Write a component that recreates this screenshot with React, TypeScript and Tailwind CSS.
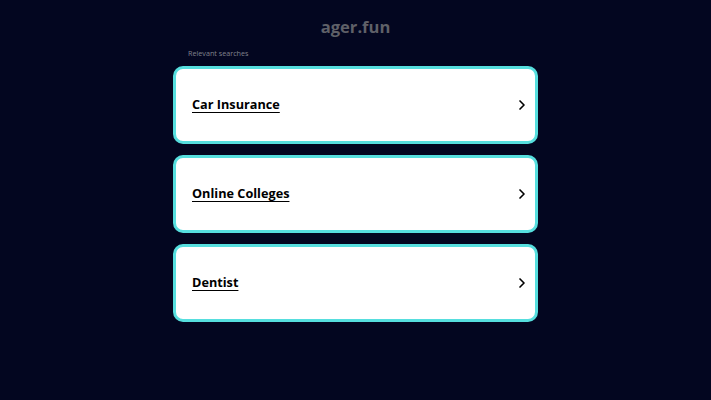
import { ChevronRight } from 'lucide-react'

const links = ['Car Insurance', 'Online Colleges', 'Dentist']

export default function App() {
  return (
    <div className="min-h-[400px] bg-[#030620] font-['Open_Sans',sans-serif]">
      <div className="mx-auto flex w-[365px] flex-col pt-[14px]">
        <h1 className="text-center text-[16.6px] font-bold leading-[26px] text-[#5f6068]">ager.fun</h1>
        <p className="mt-[7px] pl-[15px] text-[7.2px] leading-[12px] text-[#80828c]">Relevant searches</p>
        <ul className="mt-[7px] flex flex-col gap-[11px]">
          {links.map((l) => (
            <li key={l}>
              <a
                href="#"
                className="flex h-[78px] items-center justify-between rounded-[10px] border-[3px] border-[#56dede] bg-white pl-[16px] pr-[5px]"
              >
                <span className="text-[12.7px] font-bold text-black underline decoration-[1.3px] underline-offset-[3px]">{l}</span>
                <ChevronRight className="h-[16px] w-[16px] text-black" strokeWidth={2.5} />
              </a>
            </li>
          ))}
        </ul>
      </div>
    </div>
  )
}
